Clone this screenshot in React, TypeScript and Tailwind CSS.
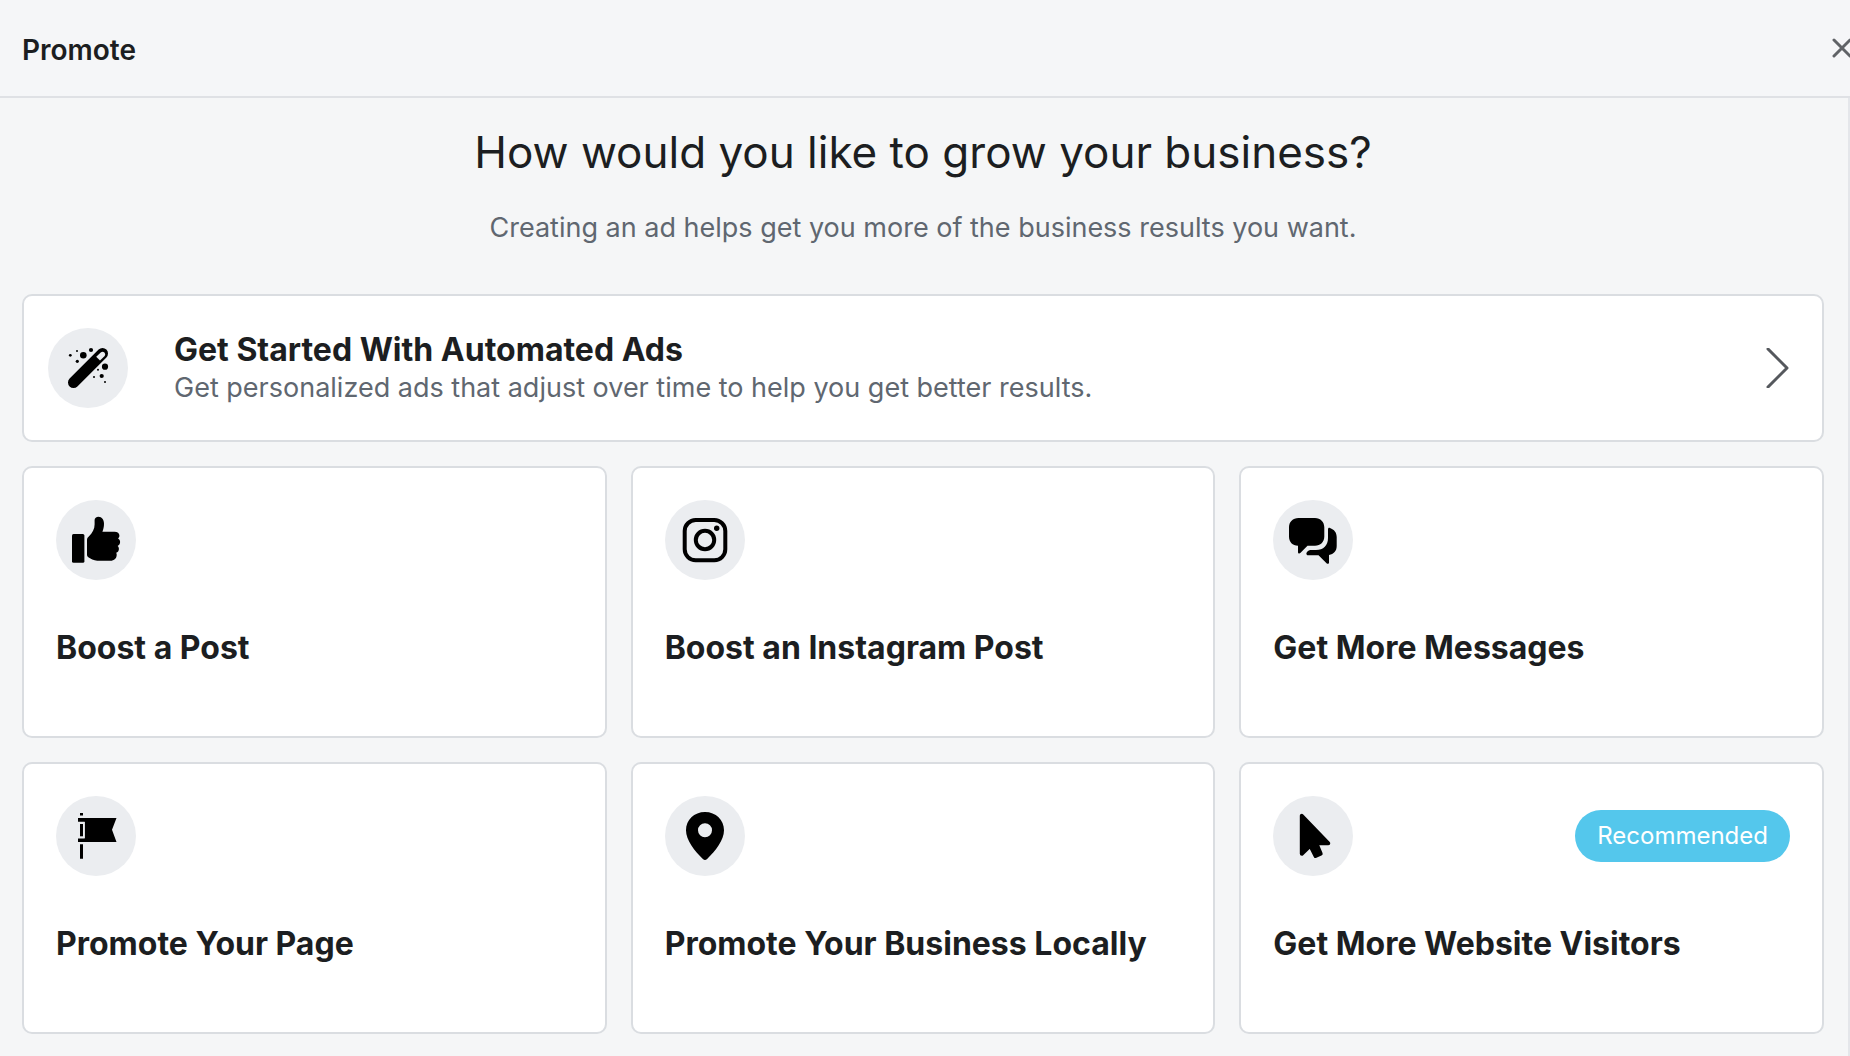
import type { ReactNode } from 'react'

type IconName = 'wand' | 'like' | 'instagram' | 'messages' | 'flag' | 'pin' | 'cursor'

interface Goal {
    title: string;
    icon: IconName;
    recommended?: boolean;
}

const goals: Goal[] = [
    { title: 'Boost a Post', icon: 'like' },
    { title: 'Boost an Instagram Post', icon: 'instagram' },
    { title: 'Get More Messages', icon: 'messages' },
    { title: 'Promote Your Page', icon: 'flag' },
    { title: 'Promote Your Business Locally', icon: 'pin' },
    { title: 'Get More Website Visitors', icon: 'cursor', recommended: true },
]

// every drawing fills the 80x80 circle
const icons: Record<IconName, ReactNode> = {
    wand: (
        <>
            <path d="M25.5 54.5 54.5 25.5" stroke="#000" strokeWidth="11" strokeLinecap="round" />
            <path d="M48.2 28.8 53 24.2a2.7 2.7 0 0 1 3.7 3.8L52 32.6Z" fill="#ebedf0" />
            <circle cx="22.3" cy="27.3" r="1.4" />
            <circle cx="29" cy="23" r="1" />
            <circle cx="35.3" cy="27.3" r="3.3" />
            <circle cx="43" cy="22" r="2.1" />
            <circle cx="29.3" cy="33.3" r="1.6" />
            <circle cx="57" cy="38.7" r="3.1" />
            <circle cx="50" cy="41.7" r="1" />
            <circle cx="46" cy="49" r="1" />
            <circle cx="53.7" cy="48" r="2.1" />
            <circle cx="57" cy="54" r="1" />
        </>
    ),
    like: (
        <>
            <rect x="16" y="34" width="12.4" height="28.7" rx="1.5" />
            <path d="M31 40c0-1.5.6-2.6 1.8-3.6C36.5 33 38.6 29 38.6 24.5V20c0-2 1.7-3.3 3.9-3.3 3.4 0 5.5 3 5.5 7 0 3-.7 5.600-1.600 8H58.500c3 0 4.900 1.600 4.900 3.900 0 1.300-.5 2.200-1.300 2.900 1.400.8 2 2 2 3.600 0 1.900-1 3.300-2.500 3.900.9.7 1.300 1.700 1.300 2.900 0 1.900-1.100 3.300-2.700 3.800.4.6.5 1.300.5 2 0 3.400-2.400 6.100-6.400 6.100H44c-3.800 0-7-.8-10-2.600l-1.700-1A2.600 2.600 0 0 1 31 55Z" />
        </>
    ),
    instagram: (
        <>
            <rect x="19.7" y="20" width="40.6" height="40.3" rx="11" fill="none" stroke="#000" strokeWidth="4" />
            <circle cx="40" cy="40" r="9.2" fill="none" stroke="#000" strokeWidth="4" />
            <circle cx="51.7" cy="28.3" r="2.7" />
        </>
    ),
    messages: (
        <>
            <path d="M25.5 18H42c5.500 0 9.300 4 9.300 9.300v9.200c0 5.500-3.800 9.300-9.300 9.300h-7.500l-7.200 7.300c-.9.900-2.300.4-2.300-.9v-6.400c-5.500-.1-9-3.800-9-9.300v-9.200C16 22 19.800 18 25.500 18Z" />
            <path d="M55 29.500c0-1.400.8-2 2-1.500 4.200 1.500 6.700 4.500 6.700 9v9c0 5-3 8.200-7.700 9v7.500c0 1.300-1.200 1.800-2.200.9L45.500 55.300H35.500c-1.800 0-2.700-1.500-1.800-2.900.9-1.400 2.300-2.400 3.800-2.400H43c7.500 0 12-4.500 12-12Z" />
        </>
    ),
    flag: (
        <>
            <path d="M24 17h3v2.500h-3zM22 22h38.500L56 33.800 60.500 46H22v-3.600h6.700V25.700H22zM24 48.300h3v14.500h-3z" />
            <path d="M22 26h6.700v16H22z" fill="#ebedf0" />
            <path d="M24 28h3v12.300h-3z" />
        </>
    ),
    pin: (
        <path
            fillRule="evenodd"
            d="M40 16c10.900 0 19 8 19 18.300 0 10-8.500 20.700-16.900 28.700a3 3 0 0 1-4.200 0C29.500 55 21 44.300 21 34.300 21 24 29.100 16 40 16Zm0 11.300a7 7 0 1 0 0 14 7 7 0 0 0 0-14Z"
        />
    ),
    cursor: (
        <path
            d="M28.800 19.800V57.700L37.300 49.500 42.600 60 47.700 57.700 43.300 47.300H55.300Z"
            stroke="#000"
            strokeWidth="4"
            strokeLinejoin="round"
        />
    ),
}

function GoalIcon({ name }: { name: IconName }) {
    return (
        <span className="block size-20 shrink-0 rounded-full bg-[#ebedf0]">
            <svg viewBox="0 0 80 80" className="size-20" aria-hidden="true">
                {icons[name]}
            </svg>
        </span>
    )
}

function GoalCard({ goal }: { goal: Goal }) {
    return (
        <button
            type="button"
            className="flex flex-col items-start gap-12 rounded-[10px] border-2 border-[#dadde1] bg-white px-8 pt-8 pb-[68px] text-left"
        >
            <span className="flex w-full items-center justify-between">
                <GoalIcon name={goal.icon} />
                {goal.recommended && (
                    <span className="rounded-full bg-[#54c7ec] px-[22px] py-2 text-2xl leading-9 text-white">
                        Recommended
                    </span>
                )}
            </span>
            <span className="text-[32px] leading-10 font-bold">{goal.title}</span>
        </button>
    )
}

export default function App() {
    return (
        <div className="min-h-screen bg-[#f5f6f7] font-['Inter',sans-serif] text-[#1c1e21]">
            <header className="flex h-[98px] items-center justify-between overflow-hidden border-b-2 border-[#dfe1e5] bg-[#f5f6f8] pl-[22px]">
                <h1 className="pt-1 text-[28px] leading-9 font-semibold">Promote</h1>
                <button type="button" aria-label="Close" className="w-4">
                    <svg viewBox="0 0 16 16" className="size-4 overflow-visible" aria-hidden="true">
                        <path d="M0 0 16 16M16 0 0 16" stroke="#606367" strokeWidth="3" strokeLinecap="round" />
                    </svg>
                </button>
            </header>

            <main className="min-h-[958px] border-r-2 border-[#e4e6ea] pt-6 pr-6 pb-[22px] pl-[22px]">
                <h2 className="text-center text-[44px] leading-[60px]">How would you like to grow your business?</h2>
                <p className="mt-7 text-center text-[27px] leading-9 text-[#606770]">
                    Creating an ad helps get you more of the business results you want.
                </p>

                <button
                    type="button"
                    className="mt-12 flex w-full items-center rounded-[10px] border-2 border-[#dadde1] bg-white py-8 pr-8 pl-6 text-left"
                >
                    <GoalIcon name="wand" />
                    <span className="ml-[46px] flex-1">
                        <span className="block text-[32px] leading-10 font-bold">Get Started With Automated Ads</span>
                        <span className="block text-[27px] leading-9 text-[#606770]">
                            Get personalized ads that adjust over time to help you get better results.
                        </span>
                    </span>
                    <svg viewBox="0 0 24 40" className="h-10 w-6" aria-hidden="true">
                        <path d="M2 1 21 20 2 39" fill="none" stroke="#55585d" strokeWidth="3" strokeLinecap="round" strokeLinejoin="round" />
                    </svg>
                </button>

                <div className="mt-6 grid grid-cols-3 gap-6">
                    {goals.map((goal) => (
                        <GoalCard key={goal.title} goal={goal} />
                    ))}
                </div>
            </main>
        </div>
    )
}
